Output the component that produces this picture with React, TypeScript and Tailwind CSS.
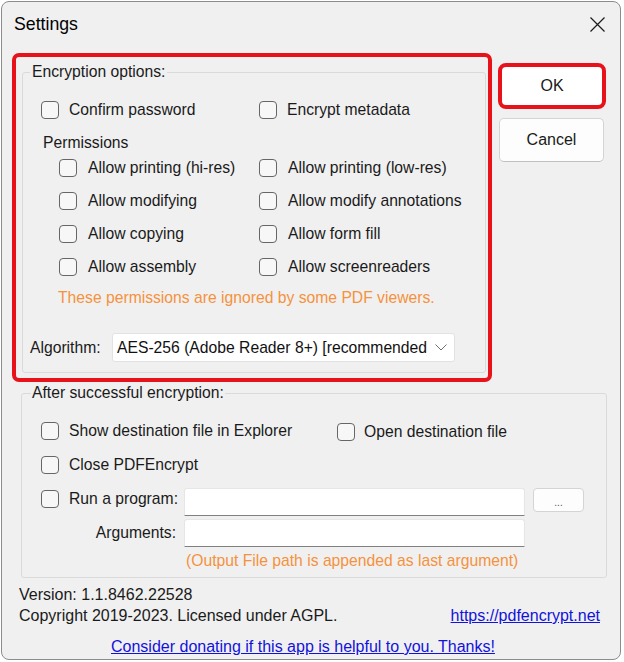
import React from "react";

function Check({ label, className = "" }: { label: string; className?: string }) {
  return (
    <div className={`flex h-[20px] items-center ${className}`}>
      <span className="h-[18px] w-[18px] shrink-0 rounded-[4px] border border-[#666666] bg-[#f7f7f7]" />
      <span className="ml-[10px] whitespace-nowrap leading-[20px]">{label}</span>
    </div>
  );
}

const permissions: [string, string][] = [
  ["Allow printing (hi-res)", "Allow printing (low-res)"],
  ["Allow modifying", "Allow modify annotations"],
  ["Allow copying", "Allow form fill"],
  ["Allow assembly", "Allow screenreaders"],
];

export default function App() {
  return (
    <div className="h-[662px] w-[624px] bg-white pl-[1px] pt-[1px] font-['Liberation_Sans',Arial,sans-serif] text-[15.7px] text-[#1a1a1a]">
      <div className="flex h-[659px] w-[620px] flex-col rounded-[8px] border border-[#8c8c8c] bg-[#f0f0f0]">
        {/* title bar */}
        <div className="flex h-[44px] shrink-0 items-center justify-between pl-[12px] pr-[15px]">
          <span className="text-[17.7px] leading-[20px] text-black">Settings</span>
          <svg width="15" height="15" viewBox="0 0 15 15" className="block">
            <path d="M0.5 0.5 L14.5 14.5 M14.5 0.5 L0.5 14.5" stroke="#1a1a1a" strokeWidth="1.2" fill="none" />
          </svg>
        </div>

        {/* encryption options + buttons */}
        <div className="mt-[7px] flex pl-[10px]">
          <div className="w-[480px] rounded-[7px] border-4 border-[#e8121b] pl-[6px] pr-[2px] pt-[5px] pb-[5px]">
            <fieldset className="rounded-[3px] border border-[#dadada]">
              <legend className="ml-[7px] px-[2px] leading-[20px]">Encryption options:</legend>
              <div className="pt-[18px] pb-[10px]">
                <div className="flex pl-[18px]">
                  <Check label="Confirm password" className="w-[218px]" />
                  <Check label="Encrypt metadata" />
                </div>
                <div className="mt-[13px] h-[20px] pl-[20px] leading-[20px]">Permissions</div>
                <div className="mt-[5px] grid grid-cols-[200px_auto] gap-y-[13px] pl-[36px]">
                  {permissions.map(([a, b]) => (
                    <React.Fragment key={a}>
                      <Check label={a} className="[&>span:last-child]:ml-[11px]" />
                      <Check label={b} className="[&>span:last-child]:ml-[11px]" />
                    </React.Fragment>
                  ))}
                </div>
                <div className="mt-[11px] h-[20px] pl-[35px] leading-[20px] text-[#f5923e]">
                  These permissions are ignored by some PDF viewers.
                </div>
                <div className="mt-[25px] flex items-center pl-[7px]">
                  <span className="w-[82px] leading-[20px]">Algorithm:</span>
                  <div className="flex h-[29px] w-[343px] items-center rounded-[3px] border border-[#e2e2e2] bg-white pl-[4px]">
                    <span className="w-[310px] overflow-hidden whitespace-nowrap leading-[20px] text-[#111]">
                      AES-256 (Adobe Reader 8+) [recommended]
                    </span>
                    <svg width="12" height="7" viewBox="0 0 12 7" className="ml-[8px] block">
                      <path d="M0.5 0.5 L6 6 L11.5 0.5" stroke="#707070" strokeWidth="1" fill="none" />
                    </svg>
                  </div>
                </div>
              </div>
            </fieldset>
          </div>

          <div className="ml-[6px] flex flex-col">
            <div className="mt-[10px] h-[46px] w-[108px] rounded-[8px] border-4 border-[#e8121b] bg-white">
              <div className="flex h-full items-center justify-center rounded-[4px] text-[16px]">OK</div>
            </div>
            <div className="ml-[1px] mt-[9px] flex h-[44px] w-[105px] items-center justify-center rounded-[5px] border border-[#d4d4d4] border-b-[#c0c0c0] bg-[#fdfdfd] text-[16px]">
              Cancel
            </div>
          </div>
        </div>

        {/* after successful encryption */}
        <fieldset className="ml-[19px] mt-[1px] w-[586px] rounded-[3px] border border-[#dadada]">
          <legend className="ml-[9px] px-[1px] leading-[20px]">After successful encryption:</legend>
          <div className="pt-[18px] pb-[6px]">
            <div className="flex pl-[19px]">
              <Check label="Show destination file in Explorer" className="w-[296px]" />
              <Check label="Open destination file" className="mt-[1px] [&>span:last-child]:ml-[9px]" />
            </div>
            <Check label="Close PDFEncrypt" className="ml-[19px] mt-[13px]" />
            <div className="mt-[13px] flex items-start pl-[19px]">
              <div className="mt-[1px] w-[143px]">
                <Check label="Run a program:" />
              </div>
              <div className="h-[28px] w-[341px] rounded-t-[3px] border border-[#e6e6e6] border-b-[#808080] bg-white" />
              <div className="ml-[8px] flex h-[24px] w-[51px] items-end justify-center rounded-[4px] border border-[#d4d4d4] bg-[#fdfdfd] pb-[3px] text-[10px] leading-[10px] text-[#555]">
                ...
              </div>
            </div>
            <div className="mt-[3px] flex items-center">
              <span className="w-[154px] text-right leading-[20px]">Arguments:</span>
              <div className="ml-[8px] h-[28px] w-[341px] rounded-t-[3px] border border-[#e6e6e6] border-b-[#808080] bg-white" />
            </div>
            <div className="mt-[4px] h-[20px] pl-[164px] leading-[20px] text-[#f5923e]">
              (Output File path is appended as last argument)
            </div>
          </div>
        </fieldset>

        {/* footer */}
        <div className="mt-[6px] pl-[17px] pr-[20px] text-[16px] leading-[21px]">
          <div>Version: 1.1.8462.22528</div>
          <div className="flex justify-between">
            <span>Copyright 2019-2023. Licensed under AGPL.</span>
            <span className="text-[#1212dd] underline">https://pdfencrypt.net</span>
          </div>
        </div>
        <div className="mt-[11px] pl-[109px] text-[16px] leading-[20px] text-[#1212dd] underline">
          Consider donating if this app is helpful to you. Thanks!
        </div>
      </div>
    </div>
  );
}
